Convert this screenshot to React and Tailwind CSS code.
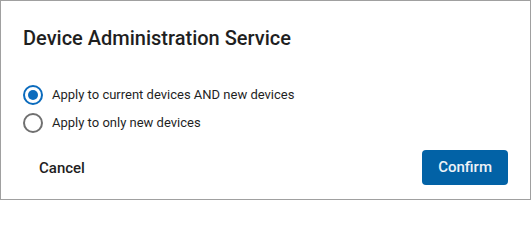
import React, { useState } from "react";

const options = [
    { id: "all", label: "Apply to current devices AND new devices" },
    { id: "new", label: "Apply to only new devices" },
];

const Radio = ({ checked }) => (
    <span
        className={
            checked
                ? "flex h-5 w-5 shrink-0 items-center justify-center rounded-full border-2 border-[#0b6bbd]"
                : "flex h-5 w-5 shrink-0 items-center justify-center rounded-full border-2 border-[#707070]"
        }
    >
        {checked && <span className="h-2.5 w-2.5 rounded-full bg-[#0b6bbd]" />}
    </span>
);

const App = () => {
    const [selected, setSelected] = useState("all");

    return (
        <div className="h-[200px] w-[531px] border border-[#a0a0a0] bg-white font-['Roboto',sans-serif] text-[#1f1f1f]">
            <div className="flex h-full flex-col px-[22px] pt-[25px]">
                <h1 className="text-[20px] font-medium leading-6">Device Administration Service</h1>

                <div className="mt-[35px] flex flex-col gap-2">
                    {options.map(option =>
                        <label
                            key={option.id}
                            className="flex cursor-pointer items-center gap-[9px] text-[13px] leading-5"
                            onClick={() => setSelected(option.id)}
                        >
                            <Radio checked={selected === option.id} />
                            <span>{option.label}</span>
                        </label>
                    )}
                </div>

                <div className="mt-[15px] flex items-center justify-between">
                    <button className="px-4 pt-[10px] pb-2 text-[15px] font-medium leading-5">Cancel</button>
                    <button className="h-[35px] rounded bg-[#0262a6] px-4 text-[15px] font-medium text-[#eef3f8]">
                        Confirm
                    </button>
                </div>
            </div>
        </div>
    );
}

export default App
